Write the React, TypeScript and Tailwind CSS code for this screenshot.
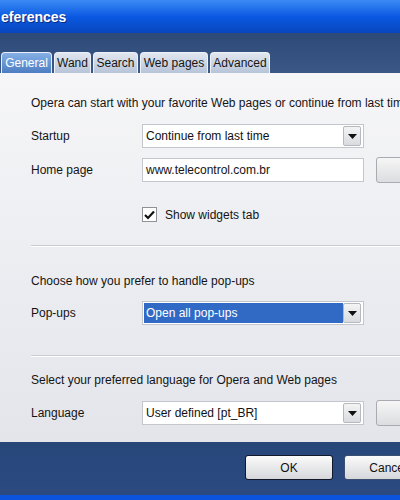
import React from "react";

const font = { fontFamily: '"Liberation Sans", Arial, sans-serif' };

function Arrow() {
  return (
    <div className="ml-auto mr-[1px] flex h-[20px] w-[18px] shrink-0 items-center justify-center rounded-[2px] border border-[#b5b8bf] bg-gradient-to-b from-[#f4f4f4] to-[#d9dbe0]">
      <svg width="9" height="5" viewBox="0 0 9 5">
        <path d="M0 0 H9 L4.5 5 Z" fill="#111" />
      </svg>
    </div>
  );
}

function Select({ text, active }: { text: string; active?: boolean }) {
  return (
    <div className="flex h-[24px] w-[222px] shrink-0 items-center border border-[#c3c6cc] bg-white p-[1px]">
      <div
        className={
          active
            ? "flex h-full flex-1 items-center bg-[#316ac5] pl-[2px] text-white"
            : "flex h-full flex-1 items-center pl-[2px] text-[#111]"
        }
      >
        {text}
      </div>
      <Arrow />
    </div>
  );
}

function SideButton() {
  return (
    <div className="ml-[12px] h-[26px] w-[80px] shrink-0 rounded-[3px] border border-[#a9abb0] bg-gradient-to-b from-[#f6f6f6] to-[#dcdde0]" />
  );
}

export default function App() {
  const tabs = [
    { t: "General", w: "w-[51px]", active: true },
    { t: "Wand", w: "w-[37px]" },
    { t: "Search", w: "w-[45px]" },
    { t: "Web pages", w: "w-[68px]" },
    { t: "Advanced", w: "w-[60px]" },
  ];
  return (
    <div className="relative h-[500px] w-[400px] overflow-hidden bg-[#2f4c7c] text-[12px] leading-[14px]" style={font}>
      <div className="flex h-[500px] w-[480px] flex-col">
        {/* title bar */}
        <div className="flex h-[33px] shrink-0 items-center bg-gradient-to-b from-[#3b8af4] via-[#0a59e2] to-[#0846be] pl-[1px]">
          <span className="text-[14px] font-bold text-white [text-shadow:1px_1px_0_#0a2f80]">eferences</span>
        </div>
        {/* tabs */}
        <div className="flex h-[40px] shrink-0 items-end gap-[2px] bg-gradient-to-b from-[#2d4a78] to-[#3a5785] pl-[1px]">
          {tabs.map((tb) => (
            <div
              key={tb.t}
              className={
                tb.active
                  ? `${tb.w} flex h-[21px] items-center justify-center rounded-t-[4px] border border-b-0 border-[#e8eef8] bg-gradient-to-b from-[#86b0e6] to-[#4c7dc2] text-white`
                  : `${tb.w} flex h-[21px] items-center justify-center rounded-t-[4px] border border-b-0 border-[#eef2f8] bg-gradient-to-b from-[#e1e7f0] to-[#b7c4d8] text-[#161616]`
              }
            >
              {tb.t}
            </div>
          ))}
        </div>
        {/* panel */}
        <div className="flex shrink-0 flex-col bg-gradient-to-b from-[#f6f6f8] to-[#e3e5eb] pb-[16px] pl-[31px] pt-[23px] text-[#141414]">
          <div className="whitespace-nowrap">Opera can start with your favorite Web pages or continue from last time</div>
          <div className="mt-[14px] flex items-center">
            <div className="w-[111px]">Startup</div>
            <Select text="Continue from last time" />
          </div>
          <div className="mt-[9px] flex items-center">
            <div className="w-[111px]">Home page</div>
            <div className="flex h-[24px] w-[222px] items-center border border-[#c3c6cc] bg-white pl-[3px]">www.telecontrol.com.br</div>
            <SideButton />
          </div>
          <div className="ml-[111px] mt-[24px] flex items-center">
            <div className="flex h-[15px] w-[15px] items-center justify-center border border-[#8f9296] bg-white">
              <svg width="11" height="10" viewBox="0 0 11 10">
                <path d="M1 5 L4 8 L10 1.5" fill="none" stroke="#111" strokeWidth="2.2" />
              </svg>
            </div>
            <div className="ml-[8px]">Show widgets tab</div>
          </div>
          <div className="mt-[23px] h-[1px] bg-[#c9ccd3] shadow-[0_1px_0_#ffffff]" />
          <div className="mt-[28px]">Choose how you prefer to handle pop-ups</div>
          <div className="mt-[13px] flex items-center">
            <div className="w-[111px]">Pop-ups</div>
            <Select text="Open all pop-ups" active />
          </div>
          <div className="mt-[30px] h-[1px] bg-[#c9ccd3] shadow-[0_1px_0_#ffffff]" />
          <div className="mt-[17px]">Select your preferred language for Opera and Web pages</div>
          <div className="mt-[13px] flex items-center">
            <div className="w-[111px]">Language</div>
            <Select text="User defined [pt_BR]" />
            <SideButton />
          </div>
        </div>
        {/* footer */}
        <div className="flex flex-1 items-start bg-gradient-to-b from-[#27467a] to-[#2b4a80] pl-[245px] pt-[13px]">
          <div className="flex h-[25px] w-[88px] items-center justify-center rounded-[3px] border border-[#111827] bg-gradient-to-b from-[#fbfbfb] to-[#d6d7db] text-[#111]">OK</div>
          <div className="ml-[11px] flex h-[25px] w-[88px] items-center justify-center rounded-[3px] border border-[#3b4f73] bg-gradient-to-b from-[#fbfbfb] to-[#d6d7db] text-[#111]">Cancel</div>
        </div>
        <div className="h-[5px] shrink-0 bg-[#0b52dc]" />
      </div>
    </div>
  );
}
